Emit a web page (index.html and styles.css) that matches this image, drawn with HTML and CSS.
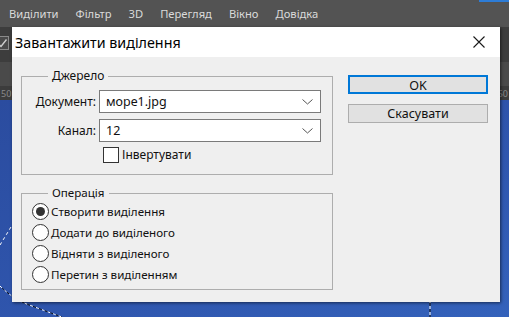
FILE: index.html
```html
<!DOCTYPE html>
<html lang="uk">
<head>
	<meta charset="UTF-8">
	<title>Завантажити виділення</title>
	<link rel="stylesheet" href="styles.css">
</head>
<body>
	<div class="app">
		<div class="menubar">
			<span>Виділити</span>
			<span>Фільтр</span>
			<span>3D</span>
			<span>Перегляд</span>
			<span>Вікно</span>
			<span>Довідка</span>
			<div class="menubar-accent"></div>
		</div>
		<div class="options-bar">
			<span class="opt-check">
				<svg width="14" height="14" viewBox="0 0 14 14"><rect x="0.5" y="0.5" width="13" height="13" fill="#4a4a4a" stroke="#8a8a8a"/><path d="M3 7.5 L6 10.5 L11.5 3.5" fill="none" stroke="#cfcfcf" stroke-width="1.4"/></svg>
			</span>
		</div>
		<div class="tabs-bar"></div>
		<div class="ruler">
			<span class="ruler-num">50</span>
			<span class="ruler-num">50</span>
		</div>
		<div class="canvas">
			<svg class="ants" width="509" height="217" viewBox="0 0 509 217">
				<path d="M0 145 L11 127" fill="none" stroke="#fff" stroke-width="1" stroke-dasharray="3 3"/>
				<path d="M0 186 Q14 200 32 206 Q48 212 62 217" fill="none" stroke="#fff" stroke-width="1" stroke-dasharray="3 3"/>
				<path d="M0 186 Q14 200 32 206 Q48 212 62 217" fill="none" stroke="#111" stroke-width="1" stroke-dasharray="3 3" stroke-dashoffset="3"/>
				<path d="M430 200 L430 217" fill="none" stroke="#fff" stroke-width="1" stroke-dasharray="3 3"/>
				<path d="M430 200 L430 217" fill="none" stroke="#111" stroke-width="1" stroke-dasharray="3 3" stroke-dashoffset="3"/>
			</svg>
		</div>
	</div>

	<div class="dialog">
		<div class="dialog-title">
			<span>Завантажити виділення</span>
			<svg class="close-icon" width="12" height="12" viewBox="0 0 12 12"><path d="M0.5 0.5 L11.5 11.5 M11.5 0.5 L0.5 11.5" stroke="#1a1a1a" stroke-width="1.1"/></svg>
		</div>
		<div class="dialog-body">
			<div class="left-col">
				<fieldset class="group">
					<legend>Джерело</legend>
					<div class="form-grid">
						<label class="field-label">Документ:</label>
						<div class="select">
							<span>море1.jpg</span>
							<svg width="11" height="6" viewBox="0 0 11 6"><path d="M0.5 0.5 L5.5 5 L10.5 0.5" fill="none" stroke="#555" stroke-width="1"/></svg>
						</div>
						<label class="field-label">Канал:</label>
						<div class="select">
							<span>12</span>
							<svg width="11" height="6" viewBox="0 0 11 6"><path d="M0.5 0.5 L5.5 5 L10.5 0.5" fill="none" stroke="#555" stroke-width="1"/></svg>
						</div>
						<span></span>
						<label class="check-row">
							<span class="checkbox"></span>
							<span>Інвертувати</span>
						</label>
					</div>
				</fieldset>

				<fieldset class="group group-ops">
					<legend>Операція</legend>
					<div class="radio-row">
						<span class="radio checked"></span>
						<span>Створити виділення</span>
					</div>
					<div class="radio-row">
						<span class="radio"></span>
						<span>Додати до виділеного</span>
					</div>
					<div class="radio-row">
						<span class="radio"></span>
						<span>Відняти з виділеного</span>
					</div>
					<div class="radio-row">
						<span class="radio"></span>
						<span>Перетин з виділенням</span>
					</div>
				</fieldset>
			</div>

			<div class="right-col">
				<button class="btn btn-default">OK</button>
				<button class="btn">Скасувати</button>
			</div>
		</div>
	</div>
</body>
</html>
```

FILE: styles.css
```css
html,
body {
	margin: 0;
	padding: 0;
}

body {
	width: 509px;
	height: 317px;
	overflow: hidden;
	position: relative;
	font-family: 'Noto Sans', 'DejaVu Sans', sans-serif;
	background: #2d52a8;
}

.app {
	display: flex;
	flex-direction: column;
	height: 317px;
}

.menubar {
	height: 27px;
	background: #535353;
	display: flex;
	align-items: center;
	gap: 17px;
	padding-left: 9px;
	color: #dadada;
	font-size: 11.2px;
	position: relative;
}

.menubar-accent {
	position: absolute;
	right: 0;
	top: 0;
	width: 30px;
	height: 2px;
	background: #2d7cd6;
}

.options-bar {
	height: 35px;
	background: #3d3d3d;
	display: flex;
	align-items: center;
}

.opt-check {
	display: flex;
	margin-left: -5px;
	margin-top: -4px;
}

.tabs-bar {
	height: 24px;
	background: #4a4a4a;
}

.ruler {
	height: 14px;
	background: #3c3c3c;
	display: flex;
	justify-content: space-between;
	align-items: center;
	color: #8a8a8a;
	font-size: 9px;
	padding: 0 1px;
}

.canvas {
	flex-grow: 1;
	background: linear-gradient(160deg, #2b4c9f, #2f56ae 60%, #3462bb);
	overflow: hidden;
}

.ants {
	display: block;
}

/* dialog window */

.dialog {
	position: absolute;
	left: 12px;
	top: 27px;
	width: 488px;
	height: 275px;
	background: #efefef;
	box-shadow: 1px 1px 3px rgba(0, 0, 0, 0.55);
	font-size: 12px;
	color: #111;
}

.dialog-title {
	height: 30px;
	background: #fff;
	display: flex;
	align-items: center;
	justify-content: space-between;
	padding: 0 15px 0 3px;
	font-size: 14.3px;
	color: #000;
}

.close-icon {
	display: block;
}

.dialog-body {
	display: flex;
	padding: 11px 0 0 9px;
	gap: 15px;
}

.left-col {
	width: 312px;
	display: flex;
	flex-direction: column;
	gap: 10px;
}

.group {
	margin: 0;
	border: 1px solid #adadad;
	padding: 6px 11px 11px 10px;
	min-width: 0;
}

.group legend {
	padding: 0 4px;
	margin-left: 16px;
	line-height: 16px;
}

.group-ops {
	padding: 0 10px 4px 10px;
	font-size: 11.6px;
}

.form-grid {
	display: grid;
	grid-template-columns: 64px 1fr;
	column-gap: 3px;
	row-gap: 6px;
	align-items: center;
}

.field-label {
	text-align: right;
}

.select {
	height: 21px;
	background: #fff;
	border: 1px solid #7a7a7a;
	display: flex;
	align-items: center;
	justify-content: space-between;
	padding: 0 7px 0 6px;
	font-size: 12.5px;
}

.check-row {
	display: flex;
	align-items: center;
	gap: 3px;
	padding-left: 4px;
	margin-top: -2px;
}

.checkbox {
	width: 14px;
	height: 14px;
	border: 1px solid #333;
	background: #fff;
}

.radio-row {
	height: 21px;
	display: flex;
	align-items: center;
	gap: 2px;
}

.radio {
	width: 15px;
	height: 15px;
	border: 1px solid #333;
	border-radius: 50%;
	background: #fff;
	display: flex;
	align-items: center;
	justify-content: center;
}

.radio.checked::after {
	content: "";
	width: 9px;
	height: 9px;
	border-radius: 50%;
	background: #333;
}

.right-col {
	display: flex;
	flex-direction: column;
	gap: 10px;
	margin-top: 7px;
}

.btn {
	width: 140px;
	height: 19px;
	padding: 0;
	margin: 0;
	background: #e1e1e1;
	border: 1px solid #adadad;
	font-family: inherit;
	font-size: 12.5px;
	color: #111;
}

.btn-default {
	border: 2px solid #0078d7;
}
```
